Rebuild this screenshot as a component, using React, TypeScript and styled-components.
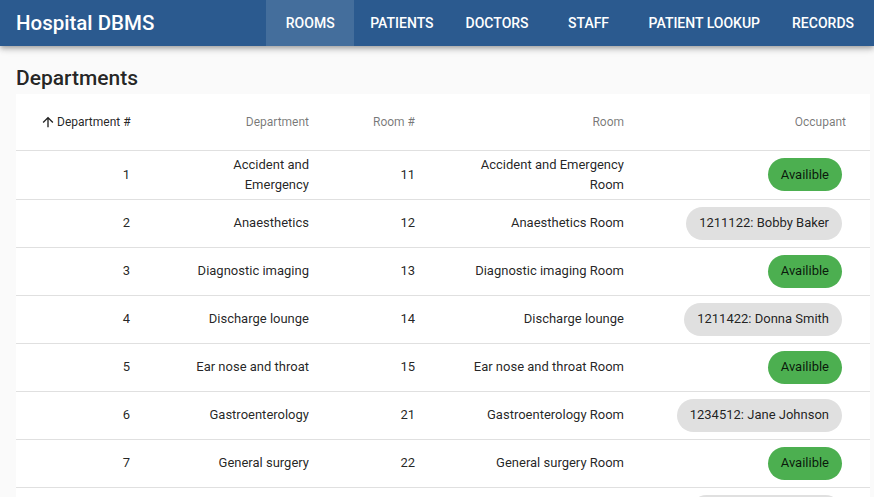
import styled, { createGlobalStyle } from "styled-components";

const GlobalStyle = createGlobalStyle`
  html, body {
    margin: 0;
    padding: 0;
    background: #fafafa;
    font-family: Roboto, "Liberation Sans", Arial, sans-serif;
    overflow: hidden;
  }
`;

type Row = {
  dept: number;
  department: string;
  room: number;
  roomName: string;
  occupant?: string;
};

const rows: Row[] = [
  { dept: 1, department: "Accident and Emergency", room: 11, roomName: "Accident and Emergency Room" },
  { dept: 2, department: "Anaesthetics", room: 12, roomName: "Anaesthetics Room", occupant: "1211122: Bobby Baker" },
  { dept: 3, department: "Diagnostic imaging", room: 13, roomName: "Diagnostic imaging Room" },
  { dept: 4, department: "Discharge lounge", room: 14, roomName: "Discharge lounge", occupant: "1211422: Donna Smith" },
  { dept: 5, department: "Ear nose and throat", room: 15, roomName: "Ear nose and throat Room" },
  { dept: 6, department: "Gastroenterology", room: 21, roomName: "Gastroenterology Room", occupant: "1234512: Jane Johnson" },
  { dept: 7, department: "General surgery", room: 22, roomName: "General surgery Room" },
  { dept: 8, department: "Haematology", room: 23, roomName: "Haematology Room", occupant: "1221341: Tom Wilson" },
];

const tabs = ["Rooms", "Patients", "Doctors", "Staff", "Patient Lookup", "Records"];

// column widths of the rooms table, in px
const colWidths = [138, 179, 106, 209, 222];

const App = () => {
  return (
    <>
      <GlobalStyle />
      <AppBar>
        <Brand>Hospital DBMS</Brand>
        <TabList>
          {tabs.map((t, i) => (
            <Tab key={t} active={i === 0}>
              {t}
            </Tab>
          ))}
        </TabList>
      </AppBar>
      <Main>
        <Title>Departments</Title>
        <Table>
          <colgroup>
            {colWidths.map((w, i) => (
              <col key={i} style={{ width: w }} />
            ))}
          </colgroup>
          <thead>
            <HeadRow>
              <HeadCell sorted>
                <SortLabel>
                  <svg width="16" height="16" viewBox="0 0 24 24">
                    <path
                      fill="currentColor"
                      d="M4 12l1.41 1.41L11 7.83V20h2V7.83l5.58 5.59L20 12l-8-8-8 8z"
                    />
                  </svg>
                  Department #
                </SortLabel>
              </HeadCell>
              <HeadCell>Department</HeadCell>
              <HeadCell>Room #</HeadCell>
              <HeadCell>Room</HeadCell>
              <HeadCell>Occupant</HeadCell>
            </HeadRow>
          </thead>
          <tbody>
            {rows.map((r) => (
              <BodyRow key={r.dept}>
                <Cell>{r.dept}</Cell>
                <Cell>{r.department}</Cell>
                <Cell>{r.room}</Cell>
                <Cell>{r.roomName}</Cell>
                <Cell>
                  {r.occupant ? (
                    <Chip>{r.occupant}</Chip>
                  ) : (
                    <Chip available>Availible</Chip>
                  )}
                </Cell>
              </BodyRow>
            ))}
          </tbody>
        </Table>
      </Main>
    </>
  );
};

export default App;

const AppBar = styled.header`
  position: relative;
  z-index: 2;
  display: flex;
  align-items: stretch;
  justify-content: space-between;
  height: 46px;
  padding-left: 16px;
  background: #2b5a8f;
  color: #fff;
  box-shadow: 0 2px 4px -1px rgba(0, 0, 0, 0.2), 0 4px 5px 0 rgba(0, 0, 0, 0.14),
    0 1px 10px 0 rgba(0, 0, 0, 0.12);
`;

const Brand = styled.div`
  display: flex;
  align-items: center;
  font-size: 20.5px;
  font-weight: 500;
`;

const TabList = styled.nav`
  display: flex;
  padding-right: 4px;
`;

const Tab = styled.div<{ active?: boolean }>`
  display: flex;
  align-items: center;
  justify-content: center;
  min-width: 88px;
  box-sizing: border-box;
  padding: 0 16px;
  font-size: 14px;
  font-weight: 500;
  text-transform: uppercase;
  white-space: nowrap;
  background: ${(p) => (p.active ? "rgba(255, 255, 255, 0.12)" : "transparent")};
`;

const Main = styled.main`
  padding: 16px 4px 0 16px;
`;

const Title = styled.h2`
  margin: 0;
  font-size: 21px;
  line-height: 32px;
  font-weight: 500;
  color: rgba(0, 0, 0, 0.87);
`;

const Table = styled.table`
  width: 854px;
  table-layout: fixed;
  border-collapse: collapse;
  border-spacing: 0;
  background: #fff;
`;

const HeadRow = styled.tr`
  height: 56px;
`;

const BodyRow = styled.tr`
  height: 48px;
`;

const HeadCell = styled.th<{ sorted?: boolean }>`
  padding: 4px 24px;
  text-align: right;
  font-size: 12px;
  font-weight: 400;
  color: ${(p) => (p.sorted ? "rgba(0, 0, 0, 0.87)" : "rgba(0, 0, 0, 0.54)")};
  border-bottom: 1px solid #e0e0e0;
  white-space: nowrap;
`;

const SortLabel = styled.span`
  display: inline-flex;
  align-items: center;
  vertical-align: middle;
  gap: 1px;
`;

const Cell = styled.td`
  padding: 4px 24px;
  text-align: right;
  font-size: 13px;
  line-height: 20px;
  color: rgba(0, 0, 0, 0.87);
  border-bottom: 1px solid #e0e0e0;
`;

const Chip = styled.span<{ available?: boolean }>`
  display: inline-flex;
  align-items: center;
  height: 33px;
  margin-right: 4px;
  padding: 0 13px;
  border-radius: 17px;
  font-size: 13px;
  color: rgba(0, 0, 0, 0.87);
  background: ${(p) => (p.available ? "#4caf50" : "#e0e0e0")};
  white-space: nowrap;
`;
